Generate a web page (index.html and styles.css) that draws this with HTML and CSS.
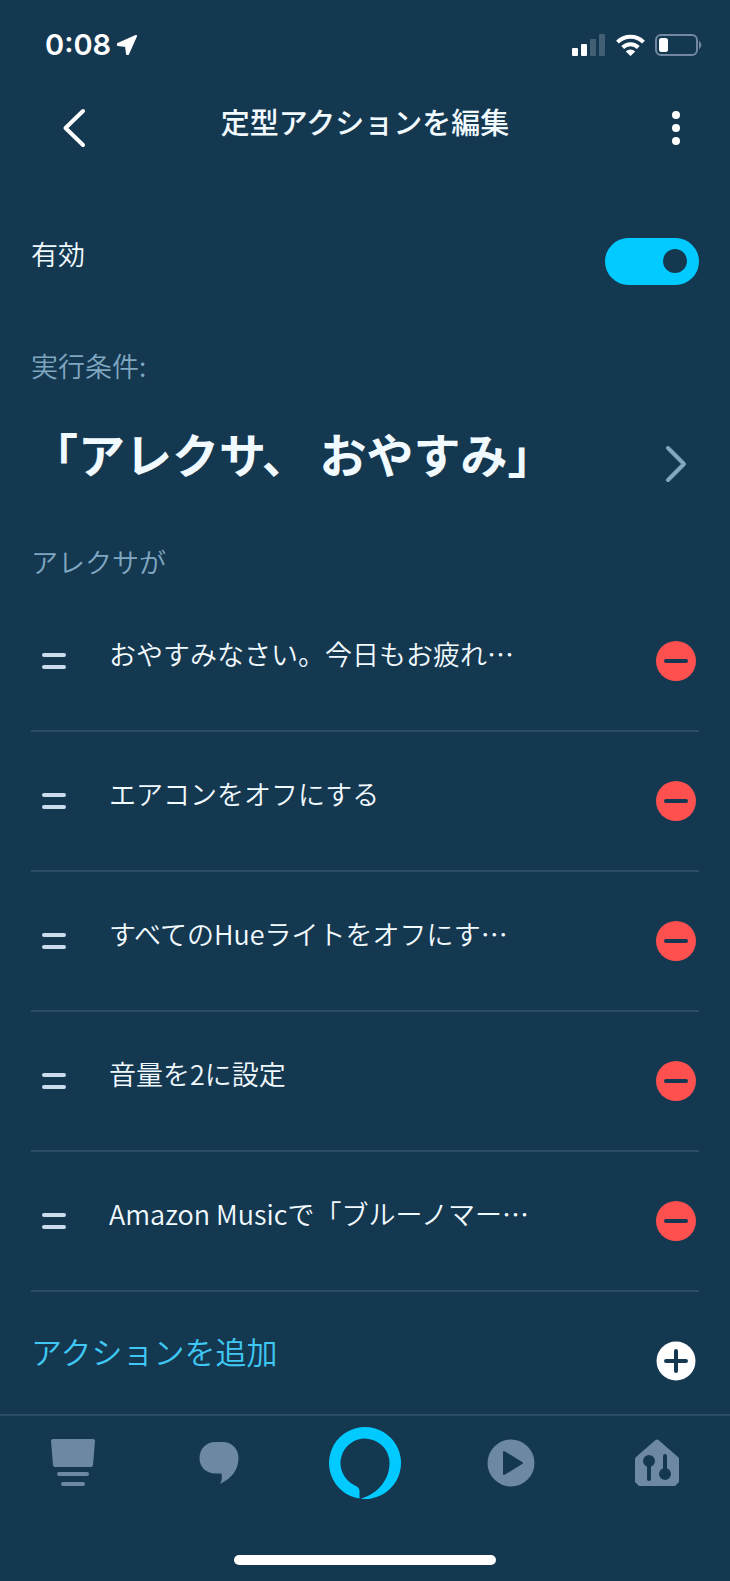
FILE: index.html
```html
<!DOCTYPE html>
<html lang="ja">
<head>
  <meta charset="UTF-8">
  <title>定型アクションを編集</title>
  <meta name="viewport" content="width=device-width, initial-scale=1.0">
  <link rel="stylesheet" href="styles.css">
</head>
<body>
  <div class="status-bar">
    <div class="clock">
      <span>0:08</span>
      <svg width="20" height="20" viewBox="0 0 20 20" aria-hidden="true"><path d="M19 1 1 9v1l8 1 1 8h1z" fill="#fff" stroke="#fff" stroke-width="2" stroke-linejoin="round"/></svg>
    </div>
    <div class="signals" aria-hidden="true">
      <svg width="35" height="22" viewBox="0 0 35 22" fill="#fff">
        <rect x="1" y="14" width="6" height="8" rx="1"/>
        <rect x="10" y="10" width="6" height="12" rx="1"/>
        <rect x="19" y="5" width="6" height="17" rx="1" opacity=".2"/>
        <rect x="28" y="0" width="6" height="22" rx="1" opacity=".2"/>
      </svg>
      <svg width="29" height="22" viewBox="0 0 29 22" fill="none" stroke="#fff" stroke-width="4">
        <path d="M1.500 8.200a18.500 18.500 0 0 1 26 0"/>
        <path d="M6.700 13.500a11 11 0 0 1 15.600 0"/>
        <path d="M14.500 22 9.800 17.400a6.800 6.800 0 0 1 9.400 0z" fill="#fff" stroke="none"/>
      </svg>
      <svg width="47" height="22" viewBox="0 0 47 22">
        <rect x="1" y="1" width="41" height="20" rx="5" fill="none" stroke="#7288a0" stroke-width="2"/>
        <rect x="4" y="4" width="9" height="14" rx="2.500" fill="#fff"/>
        <path d="M44.500 7.500q3 3.500 0 7z" fill="#7288a0" stroke="#7288a0"/>
      </svg>
    </div>
  </div>

  <header>
    <button class="back-btn" aria-label="戻る">
      <svg width="24" height="40" viewBox="0 0 24 40"><path d="M21 3 3.500 20 21 37" fill="none" stroke="#fff" stroke-width="4" stroke-linecap="round" stroke-linejoin="round"/></svg>
    </button>
    <h1>定型アクションを編集</h1>
    <button class="icon-btn menu-btn" aria-label="メニュー">
      <svg width="10" height="36" viewBox="0 0 10 36" fill="#fff"><circle cx="5" cy="5" r="4"/><circle cx="5" cy="18" r="4"/><circle cx="5" cy="31" r="4"/></svg>
    </button>
  </header>

  <main>
    <div class="enabled">
      <label class="label" for="enabled">有効</label>
      <input type="checkbox" class="switch" id="enabled" role="switch" checked>
    </div>

    <h2>実行条件:</h2>
    <a class="trigger" href="#trigger">
      <strong class="label">「アレクサ、 おやすみ」</strong>
      <span class="icon-btn">
        <svg width="24" height="40" viewBox="0 0 24 40"><path d="M4 4 20 20 4 36" fill="none" stroke="#7fa7c0" stroke-width="4" stroke-linecap="round" stroke-linejoin="round"/></svg>
      </span>
    </a>

    <h2>アレクサが</h2>
    <ul class="actions">
      <li>
        <button class="icon-btn handle" aria-label="並べ替え"></button>
        <span class="label">おやすみなさい。今日もお疲れ…</span>
        <button class="icon-btn" aria-label="削除"><span class="remove"></span></button>
      </li>
      <li>
        <button class="icon-btn handle" aria-label="並べ替え"></button>
        <span class="label">エアコンをオフにする</span>
        <button class="icon-btn" aria-label="削除"><span class="remove"></span></button>
      </li>
      <li>
        <button class="icon-btn handle" aria-label="並べ替え"></button>
        <span class="label">すべてのHueライトをオフにす…</span>
        <button class="icon-btn" aria-label="削除"><span class="remove"></span></button>
      </li>
      <li>
        <button class="icon-btn handle" aria-label="並べ替え"></button>
        <span class="label">音量を2に設定</span>
        <button class="icon-btn" aria-label="削除"><span class="remove"></span></button>
      </li>
      <li>
        <button class="icon-btn handle" aria-label="並べ替え"></button>
        <span class="label">Amazon Musicで「ブルーノマー…</span>
        <button class="icon-btn" aria-label="削除"><span class="remove"></span></button>
      </li>
    </ul>

    <button class="add">
      <span class="label">アクションを追加</span>
      <span class="icon-btn">
        <svg width="40" height="40" viewBox="0 0 40 40"><circle cx="20" cy="20" r="19.500" fill="#fff"/><path d="M10 20h20M20 10v20" stroke="#153851" stroke-width="4" stroke-linecap="round"/></svg>
      </span>
    </button>
  </main>

  <nav>
    <a href="#home" aria-label="ホーム">
      <svg width="44" height="48" viewBox="0 0 44 48" fill="currentColor"><path d="M2 0h40q2 0 2 2l-2 24q0 2-2 2H4q-2 0-2-2L0 2q0-2 2-2z"/><rect x="6" y="33" width="32" height="4" rx="2"/><rect x="10" y="43" width="24" height="4" rx="2"/></svg>
    </a>
    <a href="#talk" aria-label="連絡">
      <svg width="40" height="42" viewBox="0 0 40 42" fill="currentColor"><path d="M16 0h8C33 0 39.500 7 39.500 16c0 11-6 20-18.500 26 2-3 2-6 1.500-10.500h-6C7 31.500.500 25 .500 16S7 0 16 0z"/></svg>
    </a>
    <a href="#alexa" aria-label="Alexa">
      <svg width="72" height="72" viewBox="0 0 72 72"><path d="M30.500 71.600A36 36 0 1 1 32 71.800C50 66 60.500 52 60.500 36A24.500 24.500 0 1 0 25 58C28.500 59.600 30.500 61 30.500 64z" fill="#00caff"/></svg>
    </a>
    <a href="#play" aria-label="再生">
      <svg width="48" height="48" viewBox="0 0 48 48"><circle cx="24" cy="24" r="23.500" fill="currentColor"/><path d="M17 13v22l18-11z" fill="#153851" stroke="#153851" stroke-width="2" stroke-linejoin="round"/></svg>
    </a>
    <a href="#devices" aria-label="デバイス">
      <svg width="44" height="48" viewBox="0 0 44 48"><path d="M20.500 1q1.500-1 3 0L43 18q1 1 1 2v23l-4 4H4l-4-4V20q0-1 1-2z" fill="currentColor"/><g fill="#153851" stroke="#153851" stroke-width="4" stroke-linecap="round"><path d="M14 22v18M30 17v18"/><circle cx="14" cy="22" r="4"/><circle cx="30" cy="35" r="4"/></g></svg>
    </a>
  </nav>
  <div class="home-indicator"></div>
</body>
</html>
```
FILE: styles.css
```css
:root {
  --bg: #153851;
  --text: #f1faff;
  --muted: #7fa7c0;
  --line: #2a4c66;
  --accent: #00caff;
  --link: #3fc8f4;
  --danger: #ff5050;
  --tab: #6c88a2;
}

* {
  box-sizing: border-box;
}

body {
  background: var(--bg);
  color: var(--text);
  font-family: "Noto Sans CJK JP", sans-serif;
  font-size: 27px;
  font-weight: 350;
  line-height: 40px;
  margin: 0;
  min-height: 100vh;
  display: flex;
  flex-direction: column;
}

button {
  background: none;
  border: none;
  padding: 0;
  color: inherit;
  font: inherit;
  cursor: pointer;
}

a {
  color: inherit;
  text-decoration: none;
}

svg {
  display: block;
}

.status-bar {
  display: flex;
  align-items: center;
  justify-content: space-between;
  height: 90px;
  padding: 0 28px 0 45px;
}

.clock,
.signals {
  display: flex;
  align-items: center;
  gap: 10px;
}

.clock {
  gap: 6px;
  color: #fff;
  font-family: Inter, sans-serif;
  font-size: 29px;
  font-weight: 600;
}

header {
  display: grid;
  grid-template-columns: 88px 1fr 88px;
  align-items: center;
  height: 76px;
  padding: 0 31px;
}

h1 {
  margin: 0;
  padding-bottom: 14px;
  font-size: 29px;
  font-weight: 500;
  text-align: center;
}

.icon-btn,
.back-btn {
  display: flex;
  flex: none;
  align-items: center;
  justify-content: center;
  width: 46px;
  height: 46px;
}

.back-btn {
  width: 86px;
}

.menu-btn {
  justify-self: end;
}

main {
  padding: 52px 31px 0;
}

.label {
  flex: 1;
  padding-bottom: 14px;
  white-space: nowrap;
}

.enabled,
.trigger,
.actions li,
.add {
  display: flex;
  align-items: center;
}

.enabled {
  height: 86px;
}

.switch {
  appearance: none;
  display: flex;
  align-items: center;
  justify-content: flex-end;
  width: 94px;
  height: 47px;
  margin: 0;
  padding: 0 12px;
  border-radius: 24px;
  background: var(--tab);
  cursor: pointer;
}

.switch:checked {
  background: var(--accent);
}

.switch::before {
  content: "";
  width: 24px;
  height: 24px;
  border-radius: 50%;
  background: var(--bg);
}

.switch:not(:checked) {
  justify-content: flex-start;
}

h2 {
  margin: 42px 0 28px;
  color: var(--muted);
  font-size: 27px;
  font-weight: 350;
}

.trigger {
  height: 100px;
}

.trigger strong {
  padding-bottom: 22px;
  font-size: 47px;
  font-weight: 700;
}

.trigger + h2 {
  margin: 28px 0 10px;
}

.actions {
  list-style: none;
  margin: 0;
  padding: 0;
}

.actions li {
  gap: 32px;
  height: 140px;
  border-bottom: 2px solid var(--line);
}

.handle {
  flex-direction: column;
  gap: 8px;
}

.handle::before,
.handle::after {
  content: "";
  width: 24px;
  height: 4px;
  border-radius: 2px;
  background: #cbdcec;
}

.remove {
  display: flex;
  align-items: center;
  justify-content: center;
  width: 40px;
  height: 40px;
  border-radius: 50%;
  background: var(--danger);
}

.remove::before {
  content: "";
  width: 24px;
  height: 4px;
  border-radius: 2px;
  background: var(--bg);
}

.add {
  width: 100%;
  height: 122px;
  padding-top: 16px;
  color: var(--link);
  font-size: 31px;
  text-align: left;
}

.add .label {
  padding-bottom: 20px;
}

nav {
  display: grid;
  grid-template-columns: repeat(5, 1fr);
  border-top: 2px solid var(--line);
  color: var(--tab);
}

nav a {
  display: flex;
  align-items: center;
  justify-content: center;
  height: 94px;
}

.home-indicator {
  width: 36%;
  height: 10px;
  margin: auto auto 16px;
  border-radius: 5px;
  background: #fff;
}
```
